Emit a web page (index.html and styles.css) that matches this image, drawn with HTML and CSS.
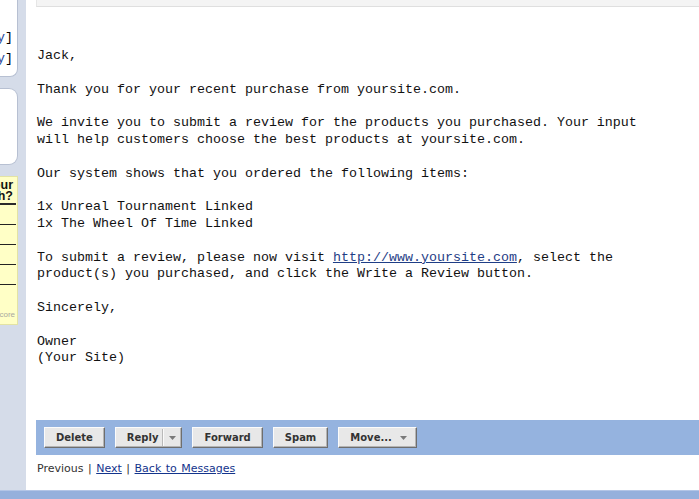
FILE: index.html
```html
<!DOCTYPE html>
<html>
<head>
<meta charset="utf-8">
<title>Message</title>
<link rel="stylesheet" href="styles.css">
</head>
<body>
<div class="page">
  <div class="layout">
    <aside class="sidebar">
      <div class="side-box box-links">
        <div class="side-inner">
          <div class="side-line"><a class="side-link">[Modify</a>]</div>
          <div class="side-line"><a class="side-link">[Modify</a>]</div>
        </div>
      </div>
      <div class="side-box box-blank"></div>
      <div class="side-box box-search">
        <div class="search-head"><span>Your</span><br><span>Search?</span></div>
        <div class="search-row"></div>
        <div class="search-row"></div>
        <div class="search-row"></div>
        <div class="search-row last"></div>
        <div class="search-foot">Score</div>
      </div>
    </aside>
    <main class="main">
      <div class="top-bar"></div>
<pre class="message">Jack,

Thank you for your recent purchase from yoursite.com.

We invite you to submit a review for the products you purchased. Your input
will help customers choose the best products at yoursite.com.

Our system shows that you ordered the following items:

1x Unreal Tournament Linked
1x The Wheel Of Time Linked

To submit a review, please now visit <a class="msg-link" href="#">http://www.yoursite.com</a>, select the
product(s) you purchased, and click the Write a Review button.

Sincerely,

Owner
(Your Site)</pre>
      <div class="actions">
        <button class="btn">Delete</button>
        <button class="btn btn-split"><span>Reply</span><span class="sep"></span><svg class="caret" width="7" height="4" viewBox="0 0 7 4"><path d="M0 0H7L3.5 4Z" fill="#7a7a7a"/></svg></button>
        <button class="btn">Forward</button>
        <button class="btn">Spam</button>
        <button class="btn btn-menu"><span>Move...</span><svg class="caret" width="7" height="4" viewBox="0 0 7 4"><path d="M0 0H7L3.5 4Z" fill="#7a7a7a"/></svg></button>
      </div>
      <div class="pager">
        <span>Previous</span> | <a href="#" class="pager-link">Next</a> | <a href="#" class="pager-link">Back to Messages</a>
      </div>
    </main>
  </div>
  <div class="bottom-band"></div>
</div>
</body>
</html>
```

FILE: styles.css
```css
html, body {
  margin: 0;
  padding: 0;
}

body {
  background: #d5dce9;
  font-family: "DejaVu Sans", Verdana, sans-serif;
  overflow: hidden;
}

.page {
  display: flex;
  flex-direction: column;
  height: 499px;
}

.layout {
  display: flex;
  flex: 1;
  min-height: 0;
}

/* ---------- left sidebar (cut off at the edge) ---------- */
.sidebar {
  width: 18px;
  margin-right: 8px;
  display: flex;
  flex-direction: column;
  gap: 11px;
  flex-shrink: 0;
}

.side-box {
  box-sizing: border-box;
  overflow: hidden;
  border: 1px solid #b7c0d2;
  border-left: none;
}

.box-links {
  height: 77px;
  background: #fff;
  border-top: none;
  border-bottom-right-radius: 8px;
  display: flex;
  justify-content: flex-end;
}

.side-inner {
  flex-shrink: 0;
  padding-top: 27px;
  padding-right: 4px;
  font-family: "Liberation Mono", "Courier New", monospace;
  font-size: 13.33px;
  line-height: 21px;
  color: #000;
  white-space: nowrap;
}

.side-link {
  color: #2a4b9b;
}

.box-blank {
  height: 77px;
  background: #fff;
  border-top-right-radius: 9px;
  border-bottom-right-radius: 9px;
}

.box-search {
  height: 149px;
  background: #ffffc6;
  border-color: #e3e3a4;
  display: flex;
  flex-direction: column;
  align-items: flex-end;
}

.search-head {
  flex-shrink: 0;
  width: 100px;
  box-sizing: border-box;
  text-align: right;
  padding: 3px 3px 0 0;
  font-family: "Liberation Sans", Arial, sans-serif;
  font-weight: bold;
  font-size: 12.5px;
  line-height: 11px;
  color: #111;
  border-bottom: 2px solid #2a2a2a;
  height: 28px;
  margin-right: 1px;
}

.search-row {
  flex-shrink: 0;
  width: 100px;
  height: 19px;
  border-bottom: 1px solid #222;
  margin-right: 1px;
}

.search-foot {
  flex-shrink: 0;
  margin-top: 25px;
  padding-right: 2px;
  font-family: "Liberation Sans", Arial, sans-serif;
  font-size: 8px;
  color: #a9a9a0;
  white-space: nowrap;
}

/* ---------- main message column ---------- */
.main {
  flex: 1;
  background: #fff;
  padding-left: 10px;
  display: flex;
  flex-direction: column;
  min-width: 0;
}

.top-bar {
  height: 6px;
  background: #f4f4f4;
  border-bottom: 1px solid #dfdfdf;
  border-left: 1px solid #e6e6e6;
  flex-shrink: 0;
}

.message {
  margin: 41px 0 0 1px;
  font-family: "Liberation Mono", "Courier New", monospace;
  font-size: 13.333px;
  line-height: 16.8px;
  color: #111;
  white-space: pre;
}

.msg-link {
  color: #1f3e86;
  text-decoration: underline;
}

.actions {
  margin-top: 53px;
  height: 35px;
  box-sizing: border-box;
  background: #95b3df;
  padding: 7px 8px;
  display: flex;
  gap: 10px;
  align-items: flex-start;
}

.btn {
  height: 21px;
  box-sizing: border-box;
  margin: 0;
  padding: 0 11px;
  font-family: "DejaVu Sans", Verdana, sans-serif;
  font-weight: bold;
  font-size: 10px;
  color: #333;
  background: #e8e8e8;
  border: 1px solid;
  border-color: #fbfbfb #6e6e6e #6e6e6e #fbfbfb;
  box-shadow: inset -1px -1px 0 #b4b4b4;
  display: flex;
  align-items: center;
}

.btn-split {
  padding-right: 5px;
}

.sep {
  width: 1px;
  height: 17px;
  background: #b9b9b9;
  border-right: 1px solid #fafafa;
  margin: 0 5px 0 4px;
}

.btn-menu {
  padding-right: 9px;
}

.btn-menu .caret {
  margin-left: 8px;
}

.caret {
  display: block;
  flex-shrink: 0;
}

.pager {
  margin-top: 7px;
  margin-left: 1px;
  font-family: "DejaVu Sans", Verdana, sans-serif;
  font-size: 11px;
  line-height: 13px;
  color: #333;
  word-spacing: 1px;
}

.pager-link {
  color: #13348c;
  text-decoration: underline;
}

.bottom-band {
  height: 8px;
  background: #95b0dc;
  border-top: 1px solid #b3c5e6;
  flex-shrink: 0;
}
```
